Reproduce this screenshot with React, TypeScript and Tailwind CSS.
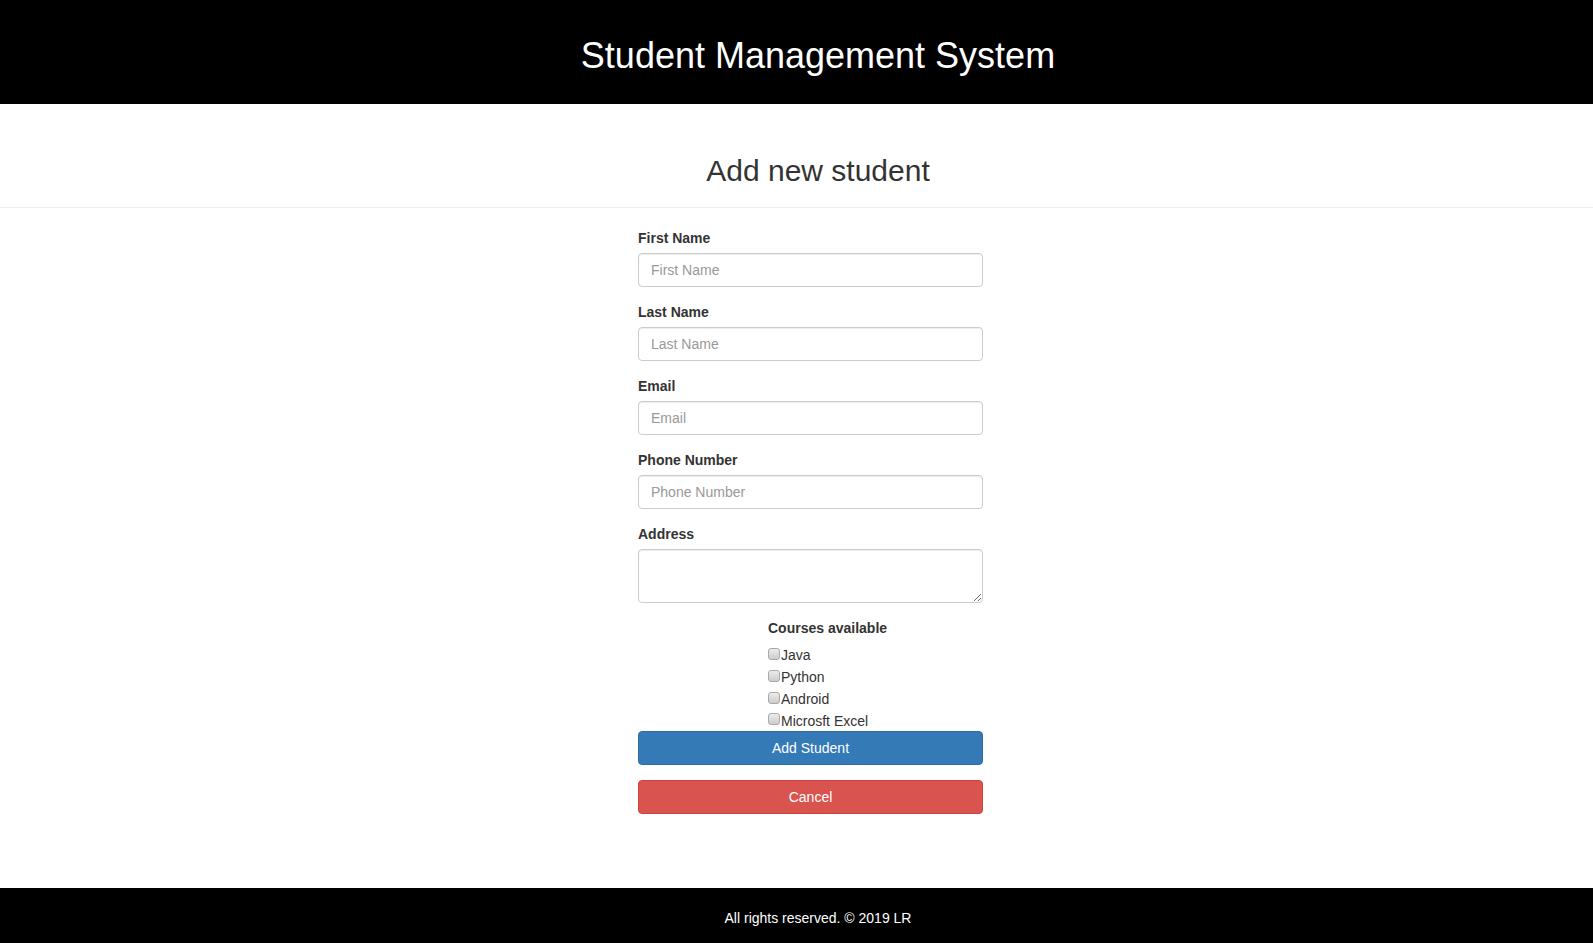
export default function App() {
  const fields = [
    { label: "First Name", placeholder: "First Name" },
    { label: "Last Name", placeholder: "Last Name" },
    { label: "Email", placeholder: "Email" },
    { label: "Phone Number", placeholder: "Phone Number" },
  ];
  const courses = ["Java", "Python", "Android", "Microsft Excel"];

  return (
    <div
      className="min-h-screen flex flex-col bg-white text-[#333]"
      style={{ fontFamily: '"Liberation Sans", Arial, Helvetica, sans-serif' }}
    >
      <header className="h-[104px] bg-black flex items-center justify-center pl-[43px] pt-[8px]">
        <h1 className="text-[36px] text-white leading-none">Student Management System</h1>
      </header>

      <main className="flex-1">
        <div className="h-[104px] border-b border-[#eee] flex items-center justify-center pl-[43px] pt-[29px]">
          <h2 className="text-[30px] leading-[33px] text-[#333]">Add new student</h2>
        </div>

        <form className="ml-[638px] w-[345px] mt-[20px]">
          {fields.map((f) => (
            <div key={f.label} className="mb-[15px]">
              <label className="block text-sm font-bold leading-5 mb-[5px]">{f.label}</label>
              <input
                type="text"
                placeholder={f.placeholder}
                className="block w-full h-[34px] px-3 text-sm text-[#555] border border-[#ccc] rounded placeholder:text-[#999] shadow-[inset_0_1px_1px_rgba(0,0,0,0.075)] outline-none"
              />
            </div>
          ))}

          <div className="mb-[15px]">
            <label className="block text-sm font-bold leading-5 mb-[5px]">Address</label>
            <textarea className="block w-full h-[54px] px-3 py-1.5 text-sm border border-[#ccc] rounded shadow-[inset_0_1px_1px_rgba(0,0,0,0.075)] outline-none" />
          </div>

          <div className="ml-[130px]">
            <label className="block text-sm font-bold leading-5 mb-[6px]">Courses available</label>
            {courses.map((c) => (
              <label key={c} className="flex items-center h-[22px] last:h-[21px] text-sm text-[#333]">
                <input
                  type="checkbox"
                  className="appearance-none w-[12px] h-[12px] -mt-[3px] mr-px border border-[#a9a9a9] rounded-[3px] bg-gradient-to-b from-[#ececec] to-[#cdcdcd] shrink-0"
                />
                <span>{c}</span>
              </label>
            ))}
          </div>

          <button
            type="button"
            className="block w-full h-[34px] mb-[15px] text-sm text-white bg-[#337ab7] border border-[#2e6da4] rounded"
          >
            Add Student
          </button>
          <button
            type="button"
            className="block w-full h-[34px] text-sm text-white bg-[#d9534f] border border-[#d43f3a] rounded"
          >
            Cancel
          </button>
        </form>
      </main>

      <footer className="h-[55px] bg-black flex items-center justify-center pl-[43px] pt-1">
        <p className="text-sm text-white">All rights reserved. © 2019 LR</p>
      </footer>
    </div>
  );
}
